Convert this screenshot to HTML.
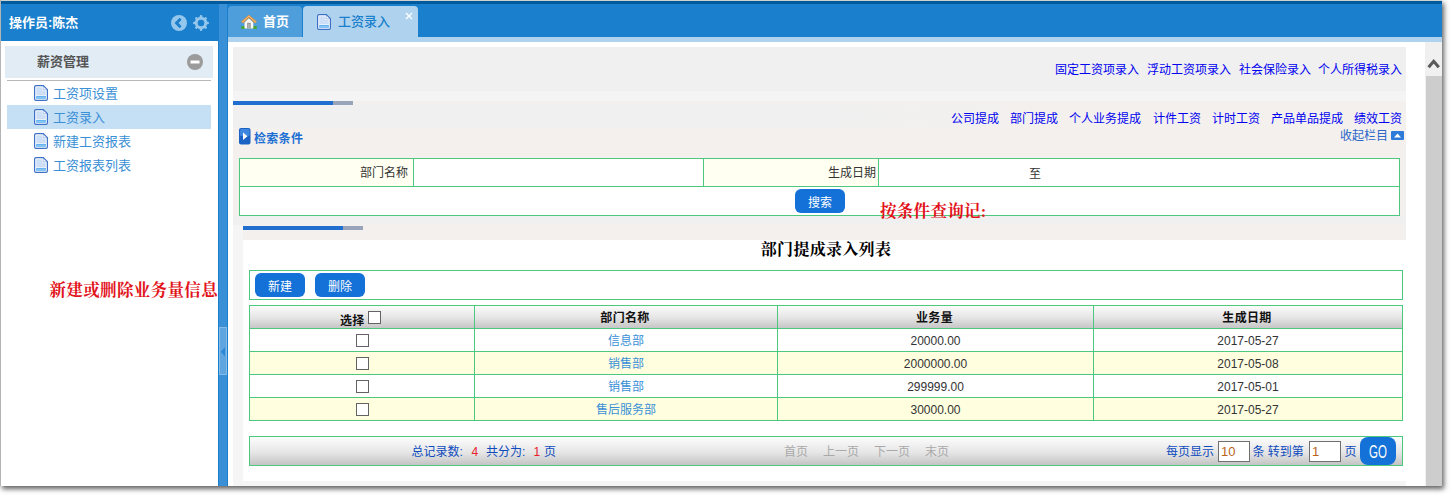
<!DOCTYPE html>
<html lang="zh-CN">
<head>
<meta charset="utf-8">
<title>薪资管理 - 工资录入</title>
<style>
*{box-sizing:border-box;margin:0;padding:0}
html,body{width:1451px;height:496px;overflow:hidden;background:#fff}
body{font-family:"Liberation Sans","Noto Sans CJK SC",sans-serif;font-size:12px;color:#333;position:relative}
.abs{position:absolute}
.t{position:absolute;white-space:nowrap;line-height:16px;height:16px}
#win{position:absolute;left:0;top:0;width:1442px;height:486px;background:#fff;box-shadow:2px 3px 5px 0 rgba(0,0,0,.62)}
.serif{font-family:"Liberation Serif","Noto Serif CJK SC",serif}
.lnk{color:#0000ee}
.g{background:#4cc87f}
.btn{position:absolute;background:#1371d8;color:#fff;border-radius:6px;text-align:center}
.cb{position:absolute;width:13px;height:13px;border:1px solid #636363;background:#fff}
.hd{position:absolute;font-weight:bold;color:#111;text-align:center;line-height:16px;white-space:nowrap;letter-spacing:.35px}
.c{position:absolute;text-align:center;line-height:16px;white-space:nowrap}
.b2{color:#0d4bbd}
</style>
</head>
<body>
<div id="win">
  <!-- top bars -->
  <div class="abs" style="left:0;top:0;width:1442px;height:42px;background:#1a7fcc"></div>
  <div class="abs" style="left:0;top:0;width:1442px;height:4px;background:#005a9e"></div>
  <div class="abs" style="left:0;top:0;width:1442px;height:1px;background:#cfcfcf"></div>
  <div class="abs" style="left:228px;top:37px;width:1214px;height:5px;background:#afd3ee"></div>
  <!-- sidebar white -->
  <div class="abs" style="left:0;top:41px;width:218px;height:445px;background:#fff"></div>
  <!-- splitter -->
  <div class="abs" style="left:218px;top:4px;width:10px;height:482px;background:#1a7fcc"></div>
  <div class="abs" style="left:219px;top:4px;width:8px;height:482px;background:#3a90d6"></div>
  <div class="abs" style="left:219px;top:327px;width:8px;height:48px;background:#5fa6e0;border:1px solid #86bbe8"></div>
  <svg class="abs" style="left:220px;top:346px" width="6" height="12" viewBox="0 0 6 12"><path d="M5 1.2 L0.8 5.8 L5 10.4 Z" fill="#2a86d6"/></svg>
  <!-- left border -->
  <div class="abs" style="left:0;top:0;width:1px;height:486px;background:#b4b4b4"></div>

  <!-- sidebar header -->
  <div class="t" style="left:9px;top:15px;font-size:13px;font-weight:bold;color:#fff;">操作员:陈杰</div>
  <svg class="abs" style="left:171px;top:15px" width="16" height="16" viewBox="0 0 16 16"><circle cx="8" cy="8" r="8" fill="#95c7ec"/><path d="M9.6 3.7 L5.5 8 L9.6 12.3" fill="none" stroke="#1a7fcc" stroke-width="2.8"/></svg>
  <svg class="abs" style="left:193px;top:15px" width="16" height="16" viewBox="0 0 16 16"><g fill="#95c7ec"><circle cx="8" cy="8" r="6.2"/><rect x="6.7" y="0" width="2.6" height="16" rx="1.2"/><rect x="0" y="6.7" width="16" height="2.6" rx="1.2"/><g transform="rotate(45 8 8)"><rect x="6.7" y="0.2" width="2.6" height="15.6" rx="1.2"/><rect x="0.2" y="6.7" width="15.6" height="2.6" rx="1.2"/></g></g><circle cx="8" cy="8" r="3.3" fill="#1a7fcc"/></svg>

  <!-- accordion -->
  <div class="abs" style="left:5px;top:46px;width:208px;height:32px;background:#e1ecf5"></div>
  <div class="t" style="left:37px;top:54px;font-size:13px;font-weight:bold;color:#555">薪资管理</div>
  <svg class="abs" style="left:187px;top:54px" width="16" height="16" viewBox="0 0 16 16"><circle cx="8" cy="8" r="8" fill="#9b9b9b"/><rect x="3.5" y="6.5" width="9" height="3" fill="#fff"/></svg>
  <div class="abs" style="left:7px;top:80px;width:204px;height:1px;background:#b8b8b8"></div>
  <div class="abs" style="left:7px;top:105px;width:204px;height:24px;background:#c5dff4"></div>

  <svg width="0" height="0" style="position:absolute"><defs>
    <g id="doc"><path d="M2 .6 H9.3 L13.4 4.7 V14 Q13.4 15.4 12 15.4 H2 Q.6 15.4 .6 14 V2 Q.6 .6 2 .6 Z" fill="#fff" stroke="#3c6fc8" stroke-width="1.2"/><path d="M2.2 2.2 H8.4 V5.6 H11.8 V10.4 H2.2 Z" fill="#cddff6"/><path d="M9.3 .9 V4.7 H13.1" fill="none" stroke="#3c6fc8" stroke-width=".7" opacity=".55"/><rect x="2.2" y="11" width="9.6" height="2.8" fill="#62b1f1"/><rect x="3.2" y="12" width="7.6" height=".9" fill="#8fcaf7"/></g>
  </defs></svg>
  <svg class="abs" style="left:34px;top:85px" width="15" height="16"><use href="#doc"/></svg>
  <svg class="abs" style="left:34px;top:109px" width="15" height="16"><use href="#doc"/></svg>
  <svg class="abs" style="left:34px;top:133px" width="15" height="16"><use href="#doc"/></svg>
  <svg class="abs" style="left:34px;top:157px" width="15" height="16"><use href="#doc"/></svg>
  <div class="t" style="left:53px;top:86px;font-size:13px;color:#3a8fd6">工资项设置</div>
  <div class="t" style="left:53px;top:110px;font-size:13px;color:#3a8fd6">工资录入</div>
  <div class="t" style="left:53px;top:134px;font-size:13px;color:#3a8fd6">新建工资报表</div>
  <div class="t" style="left:53px;top:158px;font-size:13px;color:#3a8fd6">工资报表列表</div>

  <div class="t serif" style="left:49.5px;top:283px;font-size:16.5px;font-weight:bold;color:#e2131b;letter-spacing:.35px">新建或删除业务量信息</div>

  <!-- tabs -->
  <div class="abs" style="left:228px;top:6px;width:74px;height:31px;background:#4d9eda;border-radius:4px 4px 0 0"></div>
  <div class="abs" style="left:303px;top:6px;width:115px;height:32px;background:#afd3ee;border-radius:4px 4px 0 0"></div>
  <svg class="abs" style="left:241px;top:14px" width="16" height="16" viewBox="0 0 16 16"><ellipse cx="2.6" cy="13.4" rx="2.7" ry="1.5" fill="#47a430"/><ellipse cx="13.4" cy="13.4" rx="2.7" ry="1.5" fill="#47a430"/><path d="M3.5 8.4 L7.8 4.2 L12.3 8.4 V14.4 H3.5 Z" fill="#f7f7f7"/><rect x="6.2" y="8.8" width="3.5" height="5.7" fill="#8c8c8c"/><rect x="7" y="9.6" width="1.9" height="4.9" fill="#b0b0b0"/><path d="M7.9 .7 L0 7.5 L1.9 9.5 L7.9 3.9 L14 9.5 L16 7.5 Z" fill="#d79245"/><path d="M1.1 8.2 L7.9 2.2 L14.9 8.2" fill="none" stroke="#f0c48a" stroke-width=".9"/></svg>
  <div class="t" style="left:263px;top:14px;font-size:13px;font-weight:bold;color:#fff">首页</div>
  <svg class="abs" style="left:317px;top:14px" width="15" height="16"><use href="#doc"/></svg>
  <div class="t" style="left:338px;top:14px;font-size:13px;color:#1a7fcc;font-weight:500">工资录入</div>
  <svg class="abs" style="left:405px;top:12px" width="8" height="8" viewBox="0 0 8 8"><path d="M1 1 L7 7 M7 1 L1 7" stroke="#fff" stroke-width="1.3"/></svg>

  <!-- main gray panels -->
  <div class="abs" style="left:233px;top:47px;width:1173px;height:44px;background:#f0f0f0"></div>
  <div class="abs" style="left:233px;top:91px;width:1173px;height:10px;background:#f5f4f4"></div>
  <div class="abs" style="left:233px;top:101px;width:1173px;height:124px;background:#f3f0ee"></div>
  <div class="abs" style="left:233px;top:105px;width:800px;height:22px;background:linear-gradient(90deg,#f0f0f0 0,#f0f0f0 75%,rgba(240,240,240,0))"></div>
  <div class="abs" style="left:233px;top:216px;width:1173px;height:9px;background:#f0f0f0"></div>
  <div class="abs" style="left:243px;top:225px;width:1163px;height:15px;background:#f3f0ee"></div>
  <div class="abs" style="left:233px;top:225px;width:10px;height:261px;background:#f5f5f5"></div>
  <div class="abs" style="left:233px;top:481px;width:1173px;height:5px;background:#f5f5f5"></div>

  <div class="abs" style="left:233px;top:101px;width:100px;height:4px;background:#1f6ed0"></div>
  <div class="abs" style="left:333px;top:101px;width:20px;height:4px;background:#98a4ba"></div>
  <div class="abs" style="left:243px;top:226px;width:100px;height:4px;background:#1f6ed0"></div>
  <div class="abs" style="left:343px;top:226px;width:20px;height:4px;background:#98a4ba"></div>

  <!-- link rows -->
  <div class="t lnk" style="left:1055px;top:62px">固定工资项录入</div>
  <div class="t lnk" style="left:1147px;top:62px">浮动工资项录入</div>
  <div class="t lnk" style="left:1239px;top:62px">社会保险录入</div>
  <div class="t lnk" style="left:1318px;top:62px">个人所得税录入</div>

  <div class="t lnk" style="left:951px;top:111px">公司提成</div>
  <div class="t lnk" style="left:1010px;top:111px">部门提成</div>
  <div class="t lnk" style="left:1069px;top:111px">个人业务提成</div>
  <div class="t lnk" style="left:1153px;top:111px">计件工资</div>
  <div class="t lnk" style="left:1212px;top:111px">计时工资</div>
  <div class="t lnk" style="left:1271px;top:111px">产品单品提成</div>
  <div class="t lnk" style="left:1354px;top:111px">绩效工资</div>
  <div class="t" style="left:1340px;top:128px;color:#2c66c8">收起栏目</div>
  <svg class="abs" style="left:1391px;top:131px" width="13" height="9" viewBox="0 0 13 9"><rect width="13" height="9" rx="1" fill="#2f7bd9"/><path d="M3 6.5 L6.5 2.5 L10 6.5 Z" fill="#fff"/></svg>

  <!-- search title -->
  <svg class="abs" style="left:239px;top:128px" width="12" height="17" viewBox="0 0 12 17"><rect x="0" y="0" width="11.5" height="16.5" rx="2" fill="#1c62c4"/><rect x="1" y="1" width="9.5" height="7" rx="1.5" fill="#3f86e0"/><path d="M4 4.5 L8.5 8.2 L4 12 Z" fill="#fff"/></svg>
  <div class="t" style="left:254px;top:131px;font-weight:bold;color:#1b6fd2;letter-spacing:.3px">检索条件</div>

  <!-- search table -->
  <div class="abs g" style="left:239px;top:158px;width:1161px;height:58px"></div>
  <div class="abs" style="left:240px;top:159px;width:173px;height:27px;background:#fffff2"></div>
  <div class="abs" style="left:414px;top:159px;width:289px;height:27px;background:#fff"></div>
  <div class="abs" style="left:704px;top:159px;width:174px;height:27px;background:#fffff2"></div>
  <div class="abs" style="left:879px;top:159px;width:520px;height:27px;background:#fff"></div>
  <div class="abs" style="left:240px;top:187px;width:1159px;height:28px;background:#fff"></div>
  <div class="t" style="left:360px;top:165px;color:#333">部门名称</div>
  <div class="t" style="left:828px;top:165px;color:#333">生成日期</div>
  <div class="t" style="left:1029px;top:166px;color:#333">至</div>
  <div class="btn" style="left:795px;top:189px;width:50px;height:24px;line-height:28px">搜索</div>
  <div class="t serif" style="left:880px;top:204px;font-size:16.5px;font-weight:bold;color:#e2131b;letter-spacing:.3px">按条件查询记:</div>

  <!-- list title -->
  <div class="hd serif" style="left:626px;top:240px;width:400px;font-size:16px;line-height:20px;color:#000;letter-spacing:.3px">部门提成录入列表</div>

  <!-- toolbar -->
  <div class="abs g" style="left:249px;top:270px;width:1154px;height:30px"></div>
  <div class="abs" style="left:250px;top:271px;width:1152px;height:28px;background:#fff"></div>
  <div class="btn" style="left:255px;top:273px;width:50px;height:24px;line-height:28px">新建</div>
  <div class="btn" style="left:315px;top:273px;width:50px;height:24px;line-height:28px">删除</div>

  <!-- table -->
  <div class="abs g" style="left:249px;top:305px;width:1154px;height:116px"></div>
  <div id="tbl"></div>
  <!-- header cells -->
  <div class="abs" style="left:250px;top:306px;width:224px;height:22px;background:linear-gradient(#fbfbfb,#e4e4e4 55%,#c6c6c6)"></div>
  <div class="abs" style="left:475px;top:306px;width:302px;height:22px;background:linear-gradient(#fbfbfb,#e4e4e4 55%,#c6c6c6)"></div>
  <div class="abs" style="left:778px;top:306px;width:315px;height:22px;background:linear-gradient(#fbfbfb,#e4e4e4 55%,#c6c6c6)"></div>
  <div class="abs" style="left:1094px;top:306px;width:308px;height:22px;background:linear-gradient(#fbfbfb,#e4e4e4 55%,#c6c6c6)"></div>
  <!-- rows -->
  <div class="abs" style="left:250px;top:329px;width:224px;height:22px;background:#fff"></div>
  <div class="abs" style="left:475px;top:329px;width:302px;height:22px;background:#fff"></div>
  <div class="abs" style="left:778px;top:329px;width:315px;height:22px;background:#fff"></div>
  <div class="abs" style="left:1094px;top:329px;width:308px;height:22px;background:#fff"></div>
  <div class="abs" style="left:250px;top:352px;width:224px;height:22px;background:#ffffe0"></div>
  <div class="abs" style="left:475px;top:352px;width:302px;height:22px;background:#ffffe0"></div>
  <div class="abs" style="left:778px;top:352px;width:315px;height:22px;background:#ffffe0"></div>
  <div class="abs" style="left:1094px;top:352px;width:308px;height:22px;background:#ffffe0"></div>
  <div class="abs" style="left:250px;top:375px;width:224px;height:22px;background:#fff"></div>
  <div class="abs" style="left:475px;top:375px;width:302px;height:22px;background:#fff"></div>
  <div class="abs" style="left:778px;top:375px;width:315px;height:22px;background:#fff"></div>
  <div class="abs" style="left:1094px;top:375px;width:308px;height:22px;background:#fff"></div>
  <div class="abs" style="left:250px;top:398px;width:224px;height:22px;background:#ffffe0"></div>
  <div class="abs" style="left:475px;top:398px;width:302px;height:22px;background:#ffffe0"></div>
  <div class="abs" style="left:778px;top:398px;width:315px;height:22px;background:#ffffe0"></div>
  <div class="abs" style="left:1094px;top:398px;width:308px;height:22px;background:#ffffe0"></div>

  <div class="hd" style="left:340px;top:313px">选择</div>
  <div class="cb" style="left:368px;top:311px"></div>
  <div class="hd" style="left:474px;top:310px;width:302px">部门名称</div>
  <div class="hd" style="left:777px;top:310px;width:315px">业务量</div>
  <div class="hd" style="left:1093px;top:310px;width:308px">生成日期</div>

  <div class="cb" style="left:356px;top:334px"></div>
  <div class="cb" style="left:356px;top:357px"></div>
  <div class="cb" style="left:356px;top:380px"></div>
  <div class="cb" style="left:356px;top:403px"></div>

  <div class="c" style="left:475px;top:333px;width:302px;color:#3a8fd6">信息部</div>
  <div class="c" style="left:475px;top:356px;width:302px;color:#3a8fd6">销售部</div>
  <div class="c" style="left:475px;top:379px;width:302px;color:#3a8fd6">销售部</div>
  <div class="c" style="left:475px;top:402px;width:302px;color:#3a8fd6">售后服务部</div>

  <div class="c" style="left:778px;top:333px;width:315px">20000.00</div>
  <div class="c" style="left:778px;top:356px;width:315px">2000000.00</div>
  <div class="c" style="left:778px;top:379px;width:315px">299999.00</div>
  <div class="c" style="left:778px;top:402px;width:315px">30000.00</div>

  <div class="c" style="left:1094px;top:333px;width:308px">2017-05-27</div>
  <div class="c" style="left:1094px;top:356px;width:308px">2017-05-08</div>
  <div class="c" style="left:1094px;top:379px;width:308px">2017-05-01</div>
  <div class="c" style="left:1094px;top:402px;width:308px">2017-05-27</div>

  <!-- pager -->
  <div class="abs g" style="left:249px;top:436px;width:1154px;height:30px"></div>
  <div class="abs" style="left:250px;top:437px;width:1152px;height:28px;background:linear-gradient(#fcfcfc,#e6e6e6 55%,#c4c4c4)"></div>
  <div class="t b2" style="left:411.5px;top:444px">总记录数:</div>
  <div class="t" style="left:471.5px;top:444px;color:#e8212a">4</div>
  <div class="t b2" style="left:486px;top:444px">共分为:</div>
  <div class="t" style="left:533.5px;top:444px;color:#e8212a">1</div>
  <div class="t b2" style="left:544px;top:444px">页</div>
  <div class="t" style="left:784px;top:444px;color:#a9a9a9">首页</div>
  <div class="t" style="left:823px;top:444px;color:#a9a9a9">上一页</div>
  <div class="t" style="left:874px;top:444px;color:#a9a9a9">下一页</div>
  <div class="t" style="left:925px;top:444px;color:#a9a9a9">末页</div>
  <div class="t b2" style="left:1166px;top:444px">每页显示</div>
  <div class="abs" style="left:1218px;top:441px;width:32px;height:21px;border:1px solid #6f6f6f;background:#fff"></div>
  <div class="t" style="left:1221px;top:444px;color:#b8651a;font-size:13px">10</div>
  <div class="t b2" style="left:1252.5px;top:444px">条 转到第</div>
  <div class="abs" style="left:1309px;top:441px;width:32px;height:21px;border:1px solid #6f6f6f;background:#fff"></div>
  <div class="t" style="left:1312px;top:444px;color:#b8651a;font-size:13px">1</div>
  <div class="t b2" style="left:1344.5px;top:444px">页</div>
  <div class="btn" style="left:1360px;top:437px;width:36px;height:28px;border-radius:8px"></div>
  <div class="t" style="left:1360px;top:442px;width:36px;height:20px;line-height:20px;text-align:center;color:#fff;font-size:18px;transform:scaleX(.64)">GO</div>

  <!-- scrollbar -->
  <div class="abs" style="left:1425px;top:42px;width:17px;height:444px;background:#f0f0f0"></div>
  <div class="abs" style="left:1426px;top:76px;width:16px;height:410px;background:#cdcdcd"></div>
  <svg class="abs" style="left:1427px;top:58px" width="14" height="11" viewBox="0 0 14 11"><path d="M1.6 9.2 L6.7 3.2 L11.8 9.2" fill="none" stroke="#5a5a5a" stroke-width="3"/></svg>
</div>
</body>
</html>
